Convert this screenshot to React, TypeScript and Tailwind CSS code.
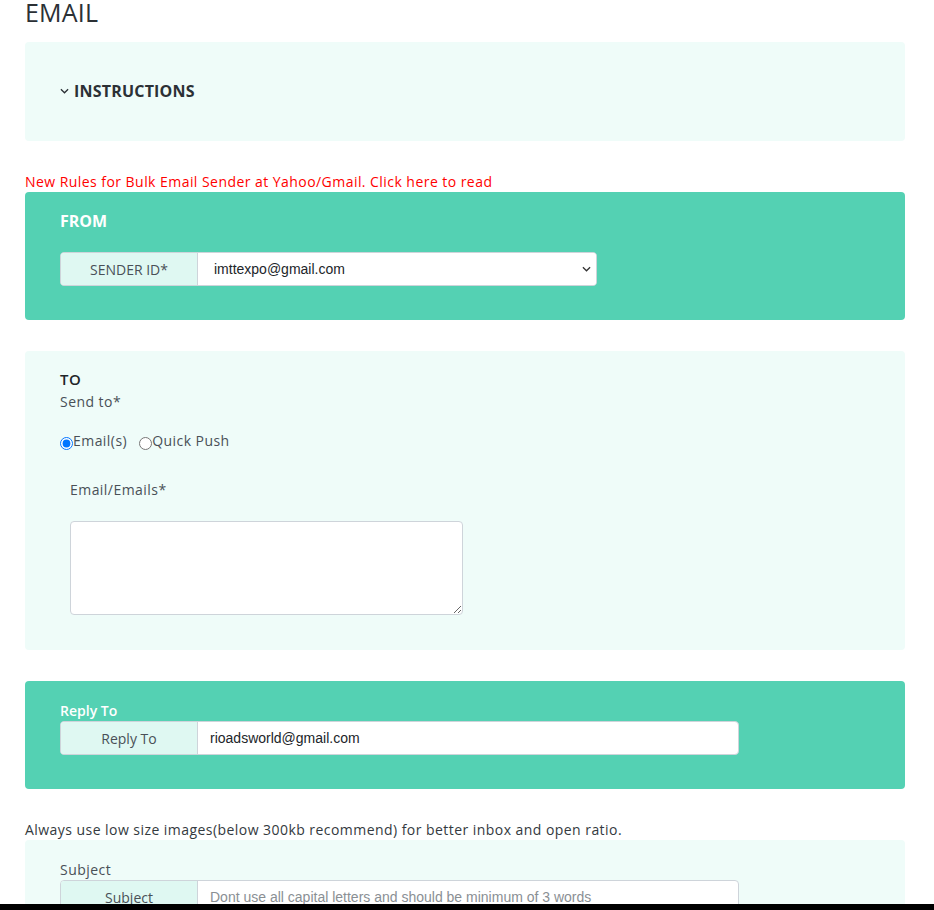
import React from "react";

const poppins = { fontFamily: '"Open Sans", "Noto Sans", Arial, sans-serif' };
const arial = { fontFamily: '"Liberation Sans", Arial, sans-serif' };

function Chevron({ className }: { className?: string }) {
  return (
    <svg viewBox="0 0 10 6" className={className} fill="none" stroke="currentColor" strokeWidth="1.4">
      <path d="M1 1l4 4 4-4" />
    </svg>
  );
}

function GroupLabel({ children }: { children: React.ReactNode }) {
  return (
    <div className="w-[137px] shrink-0 flex items-center justify-center bg-[#dff8f2] border-r border-[#ced4da] text-[14px] text-[#495057] tracking-normal">
      {children}
    </div>
  );
}

export default function App() {
  return (
    <div className="min-h-[910px] bg-white text-[#343a40] flex flex-col tracking-[0.45px]" style={poppins}>
      <div className="flex-1 px-[25px]">
        <div className="w-[880px]">
          <h1 className="text-[25px] leading-[30px] font-normal text-[#2b3035] -mt-[3px] tracking-[0.2px]">EMAIL</h1>

          {/* instructions panel */}
          <div className="mt-[15px] h-[99px] bg-[#effcf9] rounded-[4px] px-[35px] pt-[37px]">
            <button className="flex items-center gap-[5px] text-[16px] leading-[24px] font-bold text-[#2b3035] tracking-[0.2px]">
              <Chevron className="w-[9px] h-[6px] text-[#2b3035]" />
              INSTRUCTIONS
            </button>
          </div>

          <a className="block mt-[30px] text-[14px] leading-[21px] text-[#f00] cursor-pointer">
            New Rules for Bulk Email Sender at Yahoo/Gmail. Click here to read
          </a>

          {/* from */}
          <div className="bg-[#54d1b3] rounded-[4px] px-[35px] pt-[17px] pb-[34px]">
            <div className="text-[16px] leading-[24px] font-bold text-white tracking-normal">FROM</div>
            <div className="mt-[19px] w-[537px] h-[34px] flex rounded-[4px] border border-[#ced4da] overflow-hidden bg-white">
              <GroupLabel>SENDER ID*</GroupLabel>
              <div className="relative flex-1 flex items-center">
                <select
                  className="appearance-none w-full h-full pl-[16px] text-[14px] text-[#212529] bg-white outline-none tracking-normal"
                  style={arial}
                  defaultValue="imttexpo@gmail.com"
                >
                  <option>imttexpo@gmail.com</option>
                </select>
                <Chevron className="absolute right-[5px] top-[13px] w-[9px] h-[6px] text-[#333] pointer-events-none" />
              </div>
            </div>
          </div>

          {/* to */}
          <div className="mt-[31px] bg-[#effcf9] rounded-[4px] px-[35px] pt-[16px] pb-[35px]">
            <div className="text-[15px] leading-[24px] font-semibold text-[#212529]">TO</div>
            <div className="text-[14px] leading-[21px] text-[#495057]">Send to*</div>
            <div className="mt-[18px] flex items-center text-[14px] leading-[22px] text-[#495057]">
              <label className="flex items-center">
                <input type="radio" name="sendto" defaultChecked className="m-0 w-[13px] h-[13px] mt-[4px] accent-[#0075ff]" />
                <span>Email(s)</span>
              </label>
              <label className="flex items-center ml-[12px]">
                <input type="radio" name="sendto" className="m-0 w-[13px] h-[13px] mt-[4px]" />
                <span>Quick Push</span>
              </label>
            </div>
            <div className="pl-[10px]">
              <div className="mt-[27px] text-[14px] leading-[22px] text-[#495057]">Email/Emails*</div>
              <textarea className="block mt-[20px] w-[393px] h-[94px] bg-white border border-[#ced4da] rounded-[4px] outline-none" />
            </div>
          </div>

          {/* reply to */}
          <div className="mt-[31px] bg-[#54d1b3] rounded-[4px] px-[35px] pt-[20px] pb-[34px]">
            <div className="text-[14px] leading-[20px] font-semibold text-white tracking-normal">Reply To</div>
            <div className="w-[679px] h-[34px] flex rounded-[4px] border border-[#ced4da] overflow-hidden bg-white">
              <GroupLabel>Reply To</GroupLabel>
              <input
                className="flex-1 pl-[12px] text-[14px] text-[#212529] outline-none tracking-normal"
                style={arial}
                defaultValue="rioadsworld@gmail.com"
              />
            </div>
          </div>

          <div className="mt-[30px] text-[14px] leading-[21px] text-[#343a40]">
            Always use low size images(below 300kb recommend) for better inbox and open ratio.
          </div>

          {/* subject */}
          <div className="bg-[#effcf9] rounded-t-[4px] px-[35px] pt-[19px] h-[64px] overflow-hidden">
            <div className="text-[14px] leading-[21px] text-[#495057]">Subject</div>
            <div className="w-[679px] h-[34px] flex rounded-[4px] border border-[#ced4da] overflow-hidden bg-white">
              <GroupLabel>Subject</GroupLabel>
              <input
                className="flex-1 pl-[12px] text-[14px] text-[#212529] placeholder:text-[#8a8f94] outline-none tracking-normal"
                style={arial}
                placeholder="Dont use all capital letters and should be minimum of 3 words"
              />
            </div>
          </div>
        </div>
      </div>
      <div className="h-[7px] bg-black" />
    </div>
  );
}
